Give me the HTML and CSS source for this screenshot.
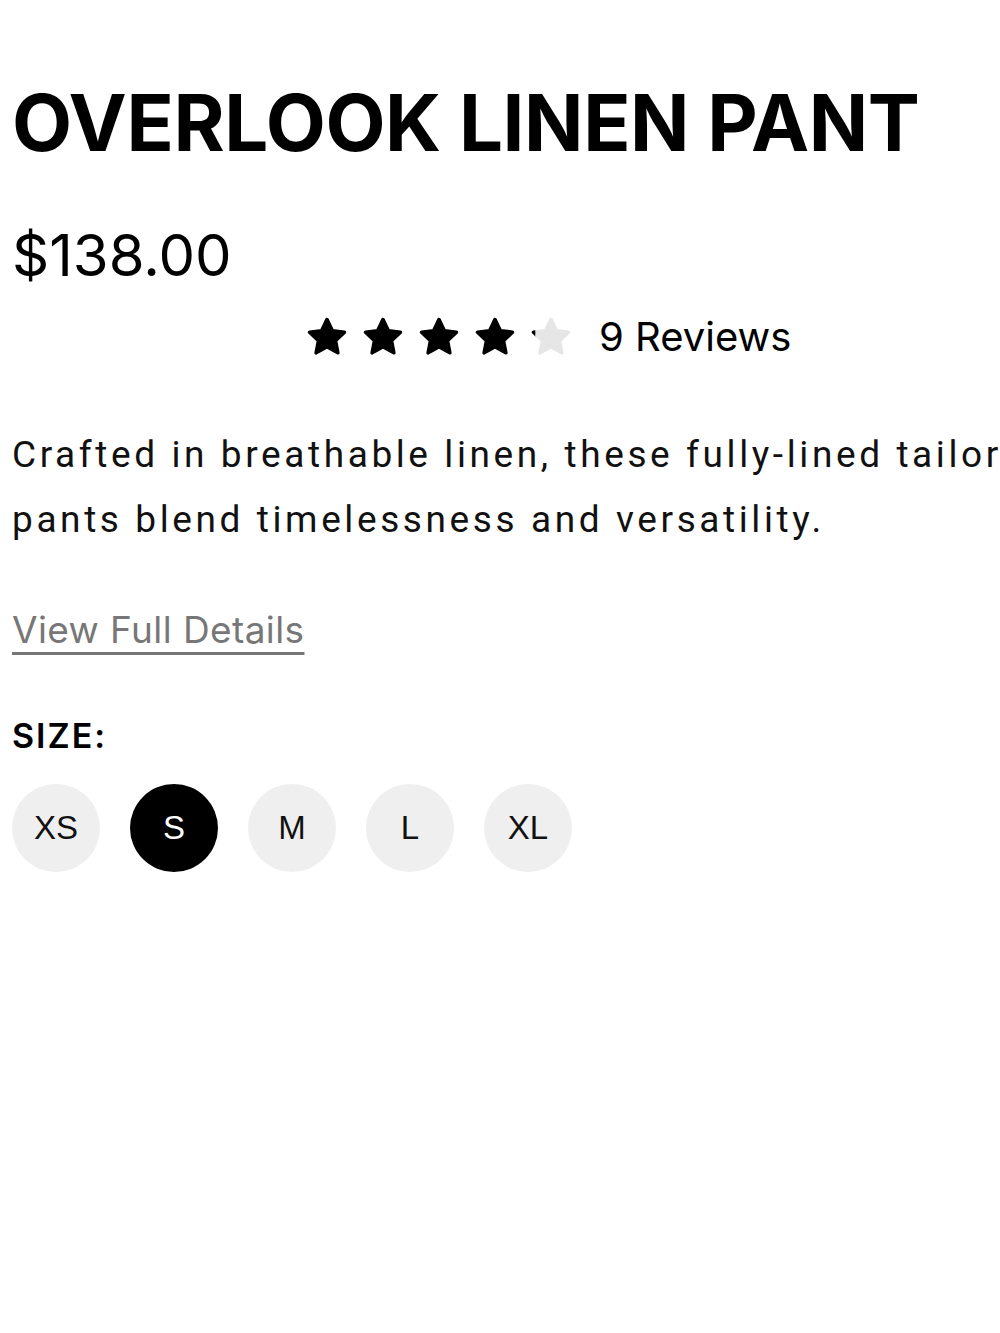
FILE: index.html
```html
<!DOCTYPE html>
<html lang="en">
<head>
  <meta charset="UTF-8">
  <meta name="viewport" content="width=device-width, initial-scale=1.0">
  <title>Overlook Linen Pant</title>
  <link rel="stylesheet" href="styles.css">
</head>
<body>
  <div class="product">
    <h1 class="product-title">OVERLOOK LINEN PANT</h1>
    <div class="product-price">$138.00</div>

    <div class="rating">
      <div class="stars">
        <svg class="star" viewBox="0 0 24 24"><path d="M12 2.5l2.9 6.1 6.6.8-4.9 4.6 1.3 6.6L12 17.3l-5.9 3.3 1.3-6.6L2.5 9.4l6.6-.8z"/></svg>
        <svg class="star" viewBox="0 0 24 24"><path d="M12 2.5l2.9 6.1 6.6.8-4.9 4.6 1.3 6.6L12 17.3l-5.9 3.3 1.3-6.6L2.5 9.4l6.6-.8z"/></svg>
        <svg class="star" viewBox="0 0 24 24"><path d="M12 2.5l2.9 6.1 6.6.8-4.9 4.6 1.3 6.6L12 17.3l-5.9 3.3 1.3-6.6L2.5 9.4l6.6-.8z"/></svg>
        <svg class="star" viewBox="0 0 24 24"><path d="M12 2.5l2.9 6.1 6.6.8-4.9 4.6 1.3 6.6L12 17.3l-5.9 3.3 1.3-6.6L2.5 9.4l6.6-.8z"/></svg>
        <svg class="star" viewBox="0 0 24 24">
          <defs>
            <clipPath id="partial"><rect x="0" y="0" width="3.4" height="24"/></clipPath>
          </defs>
          <path class="star-empty" d="M12 2.5l2.9 6.1 6.6.8-4.9 4.6 1.3 6.6L12 17.3l-5.9 3.3 1.3-6.6L2.5 9.4l6.6-.8z"/>
          <path clip-path="url(#partial)" d="M12 2.5l2.9 6.1 6.6.8-4.9 4.6 1.3 6.6L12 17.3l-5.9 3.3 1.3-6.6L2.5 9.4l6.6-.8z"/>
        </svg>
      </div>
      <span class="review-count">9 Reviews</span>
    </div>

    <p class="description">Crafted in breathable linen, these fully-lined tailored pants blend timelessness and versatility.</p>

    <a class="details-link" href="#">View Full Details</a>

    <div class="size-label">SIZE:</div>
    <div class="sizes">
      <button class="size">XS</button>
      <button class="size selected">S</button>
      <button class="size">M</button>
      <button class="size">L</button>
      <button class="size">XL</button>
    </div>
  </div>
</body>
</html>
```

FILE: styles.css
```css
* {
  box-sizing: border-box;
  margin: 0;
  padding: 0;
}

html,
body {
  overflow: hidden;
}

body {
  background: #fff;
  color: #000;
  font-family: Inter, "Liberation Sans", sans-serif;
}

.product {
  width: 1100px;
  padding: 78px 0 0 12px;
}

.product-title {
  font-size: 78px;
  font-weight: 700;
  line-height: 90px;
  letter-spacing: -0.4px;
}

.product-price {
  margin-top: 52px;
  font-size: 58px;
  line-height: 70px;
  letter-spacing: 0;
}

.rating {
  display: flex;
  align-items: center;
  margin-top: 22px;
  margin-left: 293px;
}

.stars {
  display: flex;
  gap: 12px;
}

.star {
  width: 44px;
  height: 44px;
  fill: #000;
  stroke: #000;
  stroke-width: 2;
  stroke-linejoin: round;
}

.star-empty {
  fill: #e6e6e6;
  stroke: #e6e6e6;
}

.star path[clip-path] {
  stroke: #000;
}

.review-count {
  margin-left: 26px;
  font-size: 40px;
  font-weight: 400;
}

.description {
  margin-top: 61px;
  font-family: Roboto, sans-serif;
  font-size: 37px;
  line-height: 65px;
  letter-spacing: 3.6px;
  color: #111;
}

.details-link {
  display: inline-block;
  margin-top: 55px;
  font-size: 37px;
  letter-spacing: 0.4px;
  color: #777;
  text-decoration: underline;
  text-decoration-thickness: 3px;
  text-underline-offset: 9px;
}

.size-label {
  margin-top: 63px;
  font-size: 34px;
  font-weight: 600;
  letter-spacing: 2px;
}

.sizes {
  display: flex;
  gap: 30px;
  margin-top: 28px;
}

.size {
  width: 88px;
  height: 88px;
  border: none;
  border-radius: 50%;
  background: #efefef;
  color: #111;
  font-family: "Liberation Sans", sans-serif;
  font-size: 33px;
}

.size.selected {
  background: #000;
  color: #fff;
}
```
